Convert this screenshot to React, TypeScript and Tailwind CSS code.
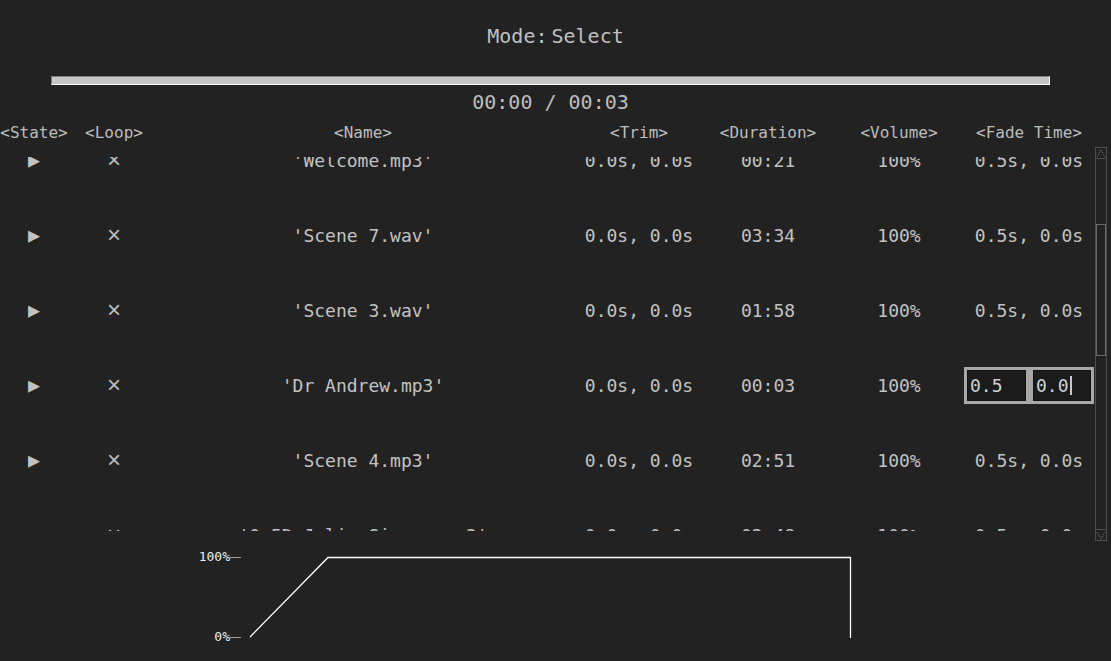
import React from "react";

type Row = {
  name: string;
  dur: string;
  edit?: boolean;
};

const rows: Row[] = [
  { name: "'Welcome.mp3'", dur: "00:21" },
  { name: "'Scene 7.wav'", dur: "03:34" },
  { name: "'Scene 3.wav'", dur: "01:58" },
  { name: "'Dr Andrew.mp3'", dur: "00:03", edit: true },
  { name: "'Scene 4.mp3'", dur: "02:51" },
  { name: "'0.5D Julie Singer.mp3'", dur: "02:48" },
];

const cols = "grid grid-cols-[68px_92px_406px_146px_112px_150px_110px]";

function Cell({ children }: { children: React.ReactNode }) {
  return (
    <div className="flex items-center justify-center whitespace-pre">{children}</div>
  );
}

function FadeEdit() {
  return (
    <div className="flex h-[37px] w-[130px] shrink-0 gap-[7px] bg-[#a8a8a8] p-[3px]">
      <div className="flex h-full w-[59px] items-center border border-[#111] bg-[#1b1b1b] pl-[2px] text-[#c9d2da]">
        0.5
      </div>
      <div className="flex h-full w-[58px] items-center border border-[#111] bg-[#1b1b1b] pl-[2px] text-[#c9d2da]">
        <span>0.0</span>
        <span className="ml-[1px] h-[19px] w-[2px] bg-[#c8c8c8]" />
      </div>
    </div>
  );
}

function Scrollbar() {
  return (
    <div className="mt-[2px] flex h-[394px] w-[12px] flex-col border border-[#4e4e4e]">
      <div className="flex h-[11px] items-center justify-center border-b border-[#4e4e4e]">
        <svg width="10" height="9" viewBox="0 0 10 9">
          <path d="M1 8 L5 1 L9 8" fill="none" stroke="#6a6a6a" strokeWidth="1" strokeDasharray="1.5 1" />
        </svg>
      </div>
      <div className="flex-1">
        <div className="h-[65px]" />
        <div className="h-[132px] border border-[#6a6a6a]" />
      </div>
      <div className="flex h-[11px] items-center justify-center border-t border-[#4e4e4e]">
        <svg width="10" height="9" viewBox="0 0 10 9">
          <path d="M1 1 L5 8 L9 1" fill="none" stroke="#6a6a6a" strokeWidth="1" strokeDasharray="1.5 1" />
        </svg>
      </div>
    </div>
  );
}

export default function App() {
  return (
    <div className="h-[661px] w-[1111px] overflow-hidden bg-[#222222] font-['DejaVu_Sans_Mono',monospace] text-[#c2c2c2]">
      {/* Mode */}
      <div className="flex h-[72px] items-center justify-center gap-[4px] text-[20px] text-[#c0c0c0]">
        <span>Mode:</span>
        <span>Select</span>
      </div>

      {/* progress bar */}
      <div className="h-[13px] pl-[51px] pt-[4px]">
        <div className="h-[9px] w-[999px] border border-b-white border-l-[#7c7c7c] border-r-white border-t-[#7c7c7c] bg-[#c6c6c6]" />
      </div>

      {/* time */}
      <div className="flex h-[34px] w-[1101px] items-center justify-center text-[20px] text-[#bdbdbd]">
        00:00 / 00:03
      </div>

      {/* headers */}
      <div className={`${cols} h-[27px] text-[16px] text-[#bcbcbc]`}>
        <Cell>&lt;State&gt;</Cell>
        <Cell>&lt;Loop&gt;</Cell>
        <Cell>&lt;Name&gt;</Cell>
        <Cell>&lt;Trim&gt;</Cell>
        <Cell>&lt;Duration&gt;</Cell>
        <Cell>&lt;Volume&gt;</Cell>
        <Cell>&lt;Fade Time&gt;</Cell>
      </div>

      {/* list */}
      <div className="-mt-[1px] flex h-[400px]">
        <div className="w-[1095px] pt-[12px]">
          <div className="h-[374px] overflow-hidden">
            <div className="-mt-[34.5px] text-[18px]">
              {rows.map((r, i) => (
                <div key={i} className={`${cols} h-[75px]`}>
                  <Cell>
                    <span className="text-[20px]">▶</span>
                  </Cell>
                  <Cell>
                    <span className="font-['Liberation_Sans',sans-serif] text-[24px] text-[#bdbdbd]">×</span>
                  </Cell>
                  <Cell>{r.name}</Cell>
                  <Cell>0.0s, 0.0s</Cell>
                  <Cell>{r.dur}</Cell>
                  <Cell>100%</Cell>
                  <Cell>{r.edit ? <FadeEdit /> : "0.5s, 0.0s"}</Cell>
                </div>
              ))}
            </div>
          </div>
        </div>
        <Scrollbar />
      </div>

      {/* fade graph */}
      <svg width="1111" height="116" viewBox="0 0 1111 116" className="block">
        <text
          x="230"
          y="12"
          textAnchor="end"
          dominantBaseline="middle"
          fontFamily="DejaVu Sans Mono, monospace"
          fontSize="13"
          fill="#e6eef6"
        >
          100%
        </text>
        <text
          x="230"
          y="92"
          textAnchor="end"
          dominantBaseline="middle"
          fontFamily="DejaVu Sans Mono, monospace"
          fontSize="13"
          fill="#e6eef6"
        >
          0%
        </text>
        <line x1="229" y1="12.5" x2="241" y2="12.5" stroke="#a0a0a0" strokeWidth="1" />
        <line x1="229" y1="92.5" x2="241" y2="92.5" stroke="#a0a0a0" strokeWidth="1" />
        <polyline
          points="250,92 328,12.5 850.5,12.5 850.5,93"
          fill="none"
          stroke="#ffffff"
          strokeWidth="1.3"
        />
      </svg>
    </div>
  );
}
